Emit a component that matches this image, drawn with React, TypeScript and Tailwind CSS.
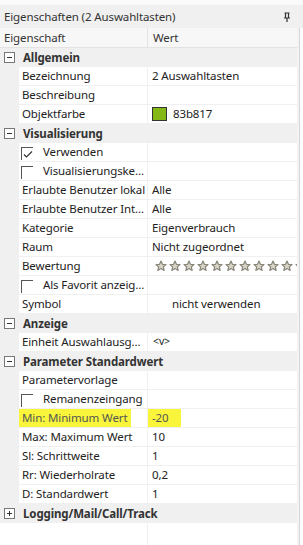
import React from 'react';

type Row =
  | { kind: 'cat'; label: string; open: boolean }
  | { kind: 'prop'; label: string; value?: React.ReactNode; check?: boolean | null; mark?: boolean };

const Stars = () => (
  <div className="flex gap-[2px] overflow-hidden">
    {Array.from({ length: 12 }).map((_, i) => (
      <svg key={i} width="12" height="12" viewBox="0 0 24 24" className="shrink-0">
        <path
          d="M12 2l2.9 6.6 7.1.6-5.4 4.7 1.7 7-6.3-3.8-6.3 3.8 1.7-7L2 9.2l7.1-.6z"
          fill="#d8d4c8"
          stroke="#8a867a"
          strokeWidth="2.4"
          strokeLinejoin="round"
        />
      </svg>
    ))}
  </div>
);

const rows: Row[] = [
  { kind: 'cat', label: 'Allgemein', open: true },
  { kind: 'prop', label: 'Bezeichnung', value: '2 Auswahltasten' },
  { kind: 'prop', label: 'Beschreibung' },
  {
    kind: 'prop',
    label: 'Objektfarbe',
    value: (
      <span className="flex items-center gap-[6px]">
        <span className="w-[15px] h-[14px] bg-[#83b817] border border-[#333]" />
        83b817
      </span>
    ),
  },
  { kind: 'cat', label: 'Visualisierung', open: true },
  { kind: 'prop', label: 'Verwenden', check: true },
  { kind: 'prop', label: 'Visualisierungske...', check: false },
  { kind: 'prop', label: 'Erlaubte Benutzer lokal', value: 'Alle' },
  { kind: 'prop', label: 'Erlaubte Benutzer Int...', value: 'Alle' },
  { kind: 'prop', label: 'Kategorie', value: 'Eigenverbrauch' },
  { kind: 'prop', label: 'Raum', value: 'Nicht zugeordnet' },
  { kind: 'prop', label: 'Bewertung', value: <span className="pl-[3px] block"><Stars /></span> },
  { kind: 'prop', label: 'Als Favorit anzeig...', check: false },
  { kind: 'prop', label: 'Symbol', value: <span className="pl-[20px]">nicht verwenden</span> },
  { kind: 'cat', label: 'Anzeige', open: true },
  { kind: 'prop', label: 'Einheit Auswahlausg...', value: <span className="text-[10.5px] pl-[1px]">&lt;v&gt;</span> },
  { kind: 'cat', label: 'Parameter Standardwert', open: true },
  { kind: 'prop', label: 'Parametervorlage' },
  { kind: 'prop', label: 'Remanenzeingang', check: false },
  { kind: 'prop', label: 'Min: Minimum Wert', value: '-20', mark: true },
  { kind: 'prop', label: 'Max: Maximum Wert', value: '10' },
  { kind: 'prop', label: 'Sl: Schrittweite', value: '1' },
  { kind: 'prop', label: 'Rr: Wiederholrate', value: '0,2' },
  { kind: 'prop', label: 'D: Standardwert', value: '1' },
  { kind: 'cat', label: 'Logging/Mail/Call/Track', open: false },
];

const Toggle = ({ open }: { open: boolean }) => (
  <svg width="11" height="11" viewBox="0 0 11 11" className="shrink-0">
    <rect x="0.5" y="0.5" width="10" height="10" fill="#fff" stroke="#777" />
    <path d="M3 5.5h5" stroke="#333" />
    {!open && <path d="M5.5 3v5" stroke="#333" />}
  </svg>
);

const Check = ({ on }: { on: boolean }) => (
  <span className="relative w-[12px] h-[13px] border-l border-t border-[#555] shrink-0">
    {on && (
      <svg width="10" height="9" viewBox="0 0 10 9" className="absolute left-[1px] top-[2px]">
        <path d="M1 4.5l2.5 2.5L9 1.5" fill="none" stroke="#333" strokeWidth="1.2" />
      </svg>
    )}
  </span>
);

export default function App() {
  return (
    <div
      className="w-[303px] h-[545px] bg-white text-[11.5px] tracking-[-0.12px] text-[#222] overflow-hidden flex flex-col"
      style={{ fontFamily: '"Noto Sans", "Open Sans", sans-serif' }}
    >
      <div className="h-[5px] bg-[#fafafa]" />
      <div className="h-[23px] bg-[#f0f0f0] flex items-center justify-between pl-[4px] pr-[12px] text-[#333]">
        <span>Eigenschaften (2 Auswahltasten)</span>
        <svg width="8" height="10" viewBox="0 0 8 10">
          <path d="M1.5 1h5M2.5 1v5M5.5 1v5M1 6h6M4 6v4" stroke="#333" strokeWidth="1.2" fill="none" />
        </svg>
      </div>
      <div className="flex flex-1">
        <div className="w-[297px] flex flex-col bg-[#f0f0f0]">
          <div className="h-[20px] flex bg-[#f7f7f7] border-b border-[#e3e3e3] text-[#333]">
            <div className="w-[148px] pl-[4px] flex items-center border-r border-[#e3e3e3]">Eigenschaft</div>
            <div className="flex-1 pl-[5px] flex items-center">Wert</div>
          </div>
          {rows.map((r, i) =>
            r.kind === 'cat' ? (
              <div key={i} className="h-[19px] flex items-center gap-[8px] pl-[4px] font-bold text-[#333]">
                <Toggle open={r.open} />
                <span>{r.label}</span>
              </div>
            ) : (
              <div key={i} className="h-[19px] flex ml-[19px] bg-white border-b border-[#f0f0f0]">
                <div className="w-[129px] shrink-0 border-r border-[#f0f0f0] flex items-center overflow-hidden whitespace-nowrap">
                  {r.check != null ? (
                    <span className="flex items-center gap-[10px] pl-[2px] pt-[3px]">
                      <Check on={r.check} />
                      <span className="-mt-[3px]">{r.label}</span>
                    </span>
                  ) : (
                    <span className={`pl-[3px] ${r.mark ? 'bg-[#f8f53a] text-[#555] pr-[4px] py-[2px]' : ''}`}>{r.label}</span>
                  )}
                </div>
                <div className="flex-1 flex items-center pl-[4px] overflow-hidden whitespace-nowrap">
                  {r.mark ? <span className="bg-[#f8f53a] text-[#555] pr-[12px] -ml-[4px] pl-[4px] py-[2px]">{r.value}</span> : r.value}
                </div>
              </div>
            )
          )}
          <div className="flex-1 flex bg-white">
            <div className="w-[148px] border-r border-[#f0f0f0]" />
          </div>
        </div>
        <div className="w-[3px] bg-[#f3f3f3] border-r border-[#d6d6d6]" />
      </div>
    </div>
  );
}
